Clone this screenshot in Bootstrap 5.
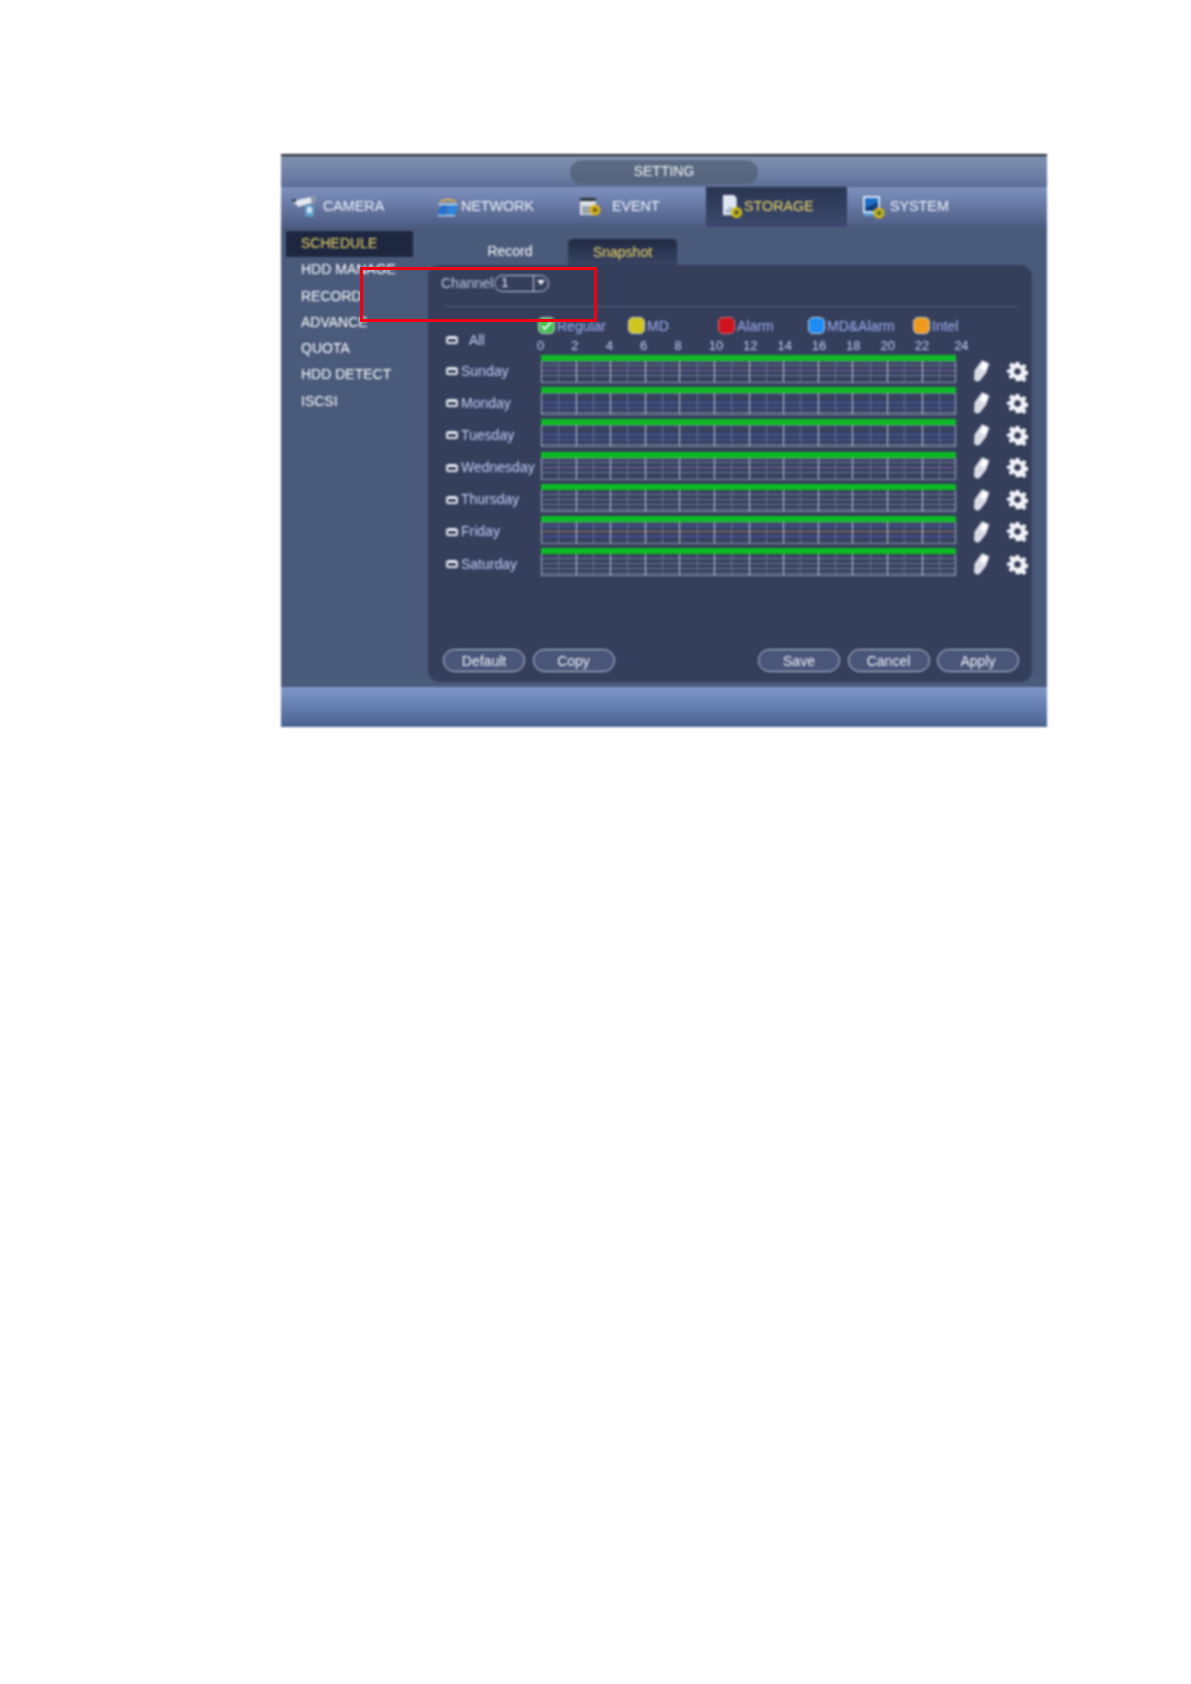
<!doctype html>
<html lang="en">
<head>
<meta charset="utf-8">
<title>Setting - Storage Schedule</title>
<link href="https://cdn.jsdelivr.net/npm/bootstrap@5.3.0/dist/css/bootstrap.min.css" rel="stylesheet">
<style>
html,body{background:#fff;height:1684px;overflow:hidden}
body{font-family:"Liberation Sans",Arial,sans-serif;padding:154px 144px 0 281px}
.dvr-wrap{position:relative;width:766px;height:573px}
.dvr{width:766px;height:573px;background:#4a5a7b;filter:blur(.8px);overflow:hidden;display:flex;flex-direction:column;border-top:2px solid #22262f}
.dvr-title{height:31px;background:linear-gradient(#7f90ae,#6a7da3 70%,#5a6c93);justify-content:center;align-items:center;flex:none}
.dvr-pill{width:188px;height:24px;border-radius:12px;background:linear-gradient(#5d6b84,#55637e);color:#f4f5f8;font-size:14px;line-height:22px;text-align:center}
.dvr-tabs{height:40px;flex:none;background:linear-gradient(#7e91bf,#6a7ca8 40%,#4c5c83)}
.dvr-tab{display:flex;align-items:center;color:#f0f3fb;font-size:14.3px;height:40px;flex:none}
.dvr-tab.on{background:linear-gradient(#2a3552,#3d4a6e);color:#f0d868}
.t1{width:135px;padding-left:10px;gap:4px}
.t2{width:147px;padding-left:21px;gap:1px;margin-left:-1px}
.t3{width:144px;padding-left:17px;gap:9px}
.t4{width:141px;padding-left:16px;gap:0}
.t5{width:160px;padding-left:15px;gap:4px}
.dvr-main{flex:1;min-height:0}
.dvr-side{width:147px;flex:none;padding:4px 0 0 5px}
.dvr-side div{height:26.3px;line-height:25px;color:#fff;font-size:14px;padding-left:15px;width:127px}
.dvr-side div.on{background:#1d2740;color:#f2da68;border-radius:1px}
.dvr-body{width:604px;flex:none;display:flex;flex-direction:column}
.dvr-sub{height:38px;flex:none;padding:12px 0 0 0;display:flex}
.sub-a{width:140px;text-align:center;padding:2px 0 0 24px;color:#fff;font-size:14px}
.sub-b{width:109px;border-radius:5px 5px 0 0;background:linear-gradient(#202a42,#384463);color:#f2da68;font-size:14px;text-align:center;line-height:26px}
.dvr-inner{height:417px;flex:none;background:#353f5c;border-radius:12px;padding:10px 13px 0 13px}
.chan{display:flex;align-items:center;color:#bcc6e2;font-size:14px;height:17px}
.chan-sel{margin-left:1px;width:55px;height:17px;border:1.5px solid #c8cedd;border-radius:9px;color:#f2f4f8;font-size:13px;line-height:14px;padding-left:6px;position:relative;display:block}
.chan-sel i{position:absolute;right:0;top:0;bottom:0;width:15px;border-left:1px solid #c8cedd}
.chan-sel i::after{content:"";position:absolute;left:3px;top:4px;border:4px solid transparent;border-top:5px solid #f2f4f8}
.dvr-rule{height:1px;background:#56607c;margin:14px 0 0 4px;width:573px}
.dvr-head{display:flex;margin-top:10px;height:38px}
.allcell{width:97px;flex:none;padding:8px 0 0 5px;display:flex;align-items:center;color:#ccd5f4;font-size:14px;gap:11px}
.legend{height:20px;display:flex}
.lg{display:flex;align-items:flex-start;gap:2px;color:#9db0f4;font-size:14px;line-height:19px;flex:none;width:90px}
.lg.wide{width:105px}
.lg b{width:17px;height:17px;border-radius:5px;border:1.5px solid #c8ced8;display:block;flex:none}
.c-g{background:#3fbf4f;display:flex!important;align-items:center;justify-content:center}
.c-y{background:#cfc51c}
.c-r{background:#d0121e;border-color:#d87080!important}
.c-b{background:#1e8cf4}
.c-o{background:#ee9a1c}
.hours{display:flex;height:18px;color:#c2cef0;font-size:13px;line-height:18px;margin-left:-1px}
.hours span{width:34.35px;flex:none}
.hours span:last-child{margin-left:5px}
.cbx{width:12px;height:8px;border:2px solid #e6e9f0;border-radius:3px 3px 2px 2px;display:block;flex:none;border-top-width:3px}
.dayrow{display:flex;height:32.2px}
.dayname{width:100px;padding-left:5px;display:flex;align-items:center;gap:3px;color:#c0ccf8;font-size:14px;height:28px;margin-top:2px;flex:none;white-space:nowrap}
.dgrid{width:415px;height:28px;flex:none;border-left:1px solid #a0aabd;border-right:1px solid #a0aabd}
.dgrid em{display:block;height:6px;background:#0cbc24;margin:0 -1px}
.dgrid s{display:block;height:22px;background-color:#37425f;border-bottom:1px solid #8f99b2;
 background-image:repeating-linear-gradient(90deg,transparent 0 33.6px,#c0c8d8 33.6px 34.6px),repeating-linear-gradient(90deg,transparent 0 16.3px,#66718f 16.3px 17.3px),repeating-linear-gradient(180deg,transparent 0 4px,#6f7a96 4px 5px)}
.dgrid s.bl{background-image:repeating-linear-gradient(90deg,transparent 0 33.6px,#c0c8d8 33.6px 34.6px),repeating-linear-gradient(90deg,transparent 0 16.3px,#66718f 16.3px 17.3px),linear-gradient(180deg,#6f7a96 0 1px,transparent 1px 9px,#4f5cc0 9px 10px,transparent 10px 14px,#4f5cc0 14px 15px,transparent 15px 19px,#6f7a96 19px 20px,transparent 20px)}
.dgrid s.pu{background-image:repeating-linear-gradient(90deg,transparent 0 33.6px,#c0c8d8 33.6px 34.6px),repeating-linear-gradient(90deg,transparent 0 16.3px,#66718f 16.3px 17.3px),linear-gradient(180deg,#6f7a96 0 1px,transparent 1px 4px,#6f7a96 4px 5px,transparent 5px 9px,#8a60b0 9px 10px,transparent 10px 14px,#6f7a96 14px 15px,transparent 15px)}
.dgrid s.or{background-image:repeating-linear-gradient(90deg,transparent 0 33.6px,#c0c8d8 33.6px 34.6px),repeating-linear-gradient(90deg,transparent 0 16.3px,#66718f 16.3px 17.3px),linear-gradient(180deg,#6f7a96 0 1px,transparent 1px 4px,#4f5cc0 4px 5px,transparent 5px 9px,#a87060 9px 10px,transparent 10px 14px,#4f5cc0 14px 15px,transparent 15px)}
.acts{display:flex;align-items:center;margin-left:17px;gap:17px;height:28px;margin-top:2px;flex:none}
.dvr-foot{display:flex;margin-top:69px;padding-left:2px}
.dvr-btn{width:82px;height:23px;border:1.5px solid #c0c8d8;border-radius:12px;background:#49567a;color:#f2f4f8;font-size:14px;line-height:20px;text-align:center;padding:0;display:block}
.dvr-btn.nxt{margin-left:7.5px}
.dvr-bar{height:40px;margin-top:auto;flex:none;background:linear-gradient(#7f98c8,#6a83b5 40%,#47608f)}
.redbox{position:absolute;left:79px;top:113px;width:237px;height:55px;border:3.5px solid #f00010;pointer-events:none}
</style>
</head>
<body>
<svg width="0" height="0" class="d-block">
 <symbol id="pen" viewBox="0 0 17 24"><path d="M10 1.500l5 2.200c1 .5 1.300 1.300 1 2.300l-3 8-6 7.500c-.8 1-1.700 1.300-3 1-1.700-.4-2.800-1.500-3-3l.6-8L7.800 2.700C8.200 1.700 9 1.200 10 1.500z" fill="#d8dbe4"/><path d="M10 3l4.600 2-2.500 7-5-2.500z" fill="#fff"/></symbol>
 <symbol id="gear" viewBox="0 0 24 24"><path fill="#f2f3f7" fill-rule="evenodd" d="M10 1h4l.7 3.300 2 .8 2.800-1.800 2.800 2.800-1.800 2.800.8 2 3.300.7v4l-3.300.7-.8 2 1.800 2.800-2.800 2.800-2.800-1.800-2 .8L14 23h-4l-.7-3.300-2-.8-2.800 1.800-2.800-2.800 1.800-2.800-.8-2L0 14v-4l3.300-.7.8-2L2.300 4.500 5.100 1.700l2.800 1.800 2-.8zM12 8.200a3.800 3.800 0 1 0 0 7.600 3.800 3.800 0 0 0 0-7.600z"/></symbol>
</svg>
<div class="dvr-wrap">
 <div class="dvr">
  <div class="dvr-title d-flex"><div class="dvr-pill">SETTING</div></div>
  <div class="dvr-tabs d-flex">
   <div class="dvr-tab t1"><svg width="28" height="24" viewBox="0 0 28 24"><path d="M1 6l19-4 1 6-14 4-2-3-3-1z" fill="#e4e7ee"/><path d="M1 5l4-1 0 3-4 0z" fill="#2c3038"/><path d="M20 1l5 0 0 7-4 1z" fill="#8a94ad"/><rect x="14" y="10" width="9" height="12" rx="2" fill="#5d9ac4"/><rect x="16" y="12" width="5" height="6" fill="#cfe3ef"/></svg><span>CAMERA</span></div>
   <div class="dvr-tab t2"><svg width="24" height="22" viewBox="0 0 28 24"><path d="M5 6q9-5 18 0" stroke="#e8b93c" stroke-width="2" fill="none"/><path d="M3 9h22" stroke="#dfe6f0" stroke-width="2"/><path d="M6 10h8l-3 12H2z" fill="#1e73d6"/><path d="M16 10h9l-3 11h-9z" fill="#2a86e4"/><path d="M2 22h20" stroke="#cfe0f2" stroke-width="1.500"/></svg><span>NETWORK</span></div>
   <div class="dvr-tab t3"><svg width="24" height="24" viewBox="0 0 24 24"><rect x="1" y="3" width="16" height="3" fill="#2b2f38"/><rect x="1" y="6" width="16" height="14" fill="#dfe3e8"/><rect x="3" y="11" width="8" height="8" fill="#9aa4ae"/><circle cx="16" cy="15" r="5.500" fill="#d9b21e"/><circle cx="16" cy="15" r="2.500" fill="#7d6a10"/></svg><span>EVENT</span></div>
   <div class="dvr-tab on t4"><svg width="22" height="28" viewBox="0 0 24 30"><path d="M1 2h12l3 3v19H1z" fill="#dfe6f2"/><path d="M3 20l6-6 3 4-5 5z" fill="#aebcd2"/><circle cx="16" cy="21" r="6" fill="#c9b41c"/><circle cx="16" cy="21" r="2.400" fill="#4d5a2a"/></svg><span>STORAGE</span></div>
   <div class="dvr-tab t5"><svg width="24" height="28" viewBox="0 0 24 28"><rect x="1" y="3" width="17" height="17" fill="#d7e2f0"/><rect x="3" y="5" width="13" height="13" fill="#1d6fc6"/><path d="M3 15l13-6v9H3z" fill="#123e7c"/><path d="M2 20h15v3H2z" fill="#5aa0d8"/><circle cx="17" cy="20" r="5.500" fill="#c9b41c"/><circle cx="17" cy="20" r="2.200" fill="#4f6a3a"/></svg><span>SYSTEM</span></div>
  </div>
  <div class="dvr-main d-flex">
   <div class="dvr-side">
    <div class="on">SCHEDULE</div><div>HDD MANAGE</div><div>RECORD</div><div>ADVANCE</div><div>QUOTA</div><div>HDD DETECT</div><div>ISCSI</div>
   </div>
   <div class="dvr-body">
    <div class="dvr-sub"><div class="sub-a">Record</div><div class="sub-b">Snapshot</div></div>
    <div class="dvr-inner">
     <div class="chan"><span>Channel</span><span class="chan-sel">1<i></i></span></div>
     <div class="dvr-rule"></div>
     <div class="dvr-head">
      <div class="allcell"><i class="cbx"></i><span>All</span></div>
      <div>
       <div class="legend">
        <div class="lg"><b class="c-g"><svg width="11" height="10" viewBox="0 0 11 10"><path d="M1 5l3 3 6-7" stroke="#eaf6ea" stroke-width="2" fill="none"/></svg></b><span>Regular</span></div>
        <div class="lg"><b class="c-y"></b><span>MD</span></div>
        <div class="lg"><b class="c-r"></b><span>Alarm</span></div>
        <div class="lg wide"><b class="c-b"></b><span>MD&amp;Alarm</span></div>
        <div class="lg"><b class="c-o"></b><span>Intel</span></div>
       </div>
       <div class="hours"><span>0</span><span>2</span><span>4</span><span>6</span><span>8</span><span>10</span><span>12</span><span>14</span><span>16</span><span>18</span><span>20</span><span>22</span><span>24</span></div>
      </div>
     </div>
     <div class="dayrow"><div class="dayname"><i class="cbx"></i><span>Sunday</span></div><div class="dgrid"><em></em><s class="pu"></s></div><div class="acts"><svg width="17" height="24"><use href="#pen"/></svg><svg width="21" height="21"><use href="#gear"/></svg></div></div>
     <div class="dayrow"><div class="dayname"><i class="cbx"></i><span>Monday</span></div><div class="dgrid"><em></em><s class="bl"></s></div><div class="acts"><svg width="17" height="24"><use href="#pen"/></svg><svg width="21" height="21"><use href="#gear"/></svg></div></div>
     <div class="dayrow"><div class="dayname"><i class="cbx"></i><span>Tuesday</span></div><div class="dgrid"><em></em><s class="bl"></s></div><div class="acts"><svg width="17" height="24"><use href="#pen"/></svg><svg width="21" height="21"><use href="#gear"/></svg></div></div>
     <div class="dayrow"><div class="dayname"><i class="cbx"></i><span>Wednesday</span></div><div class="dgrid"><em></em><s class="pu"></s></div><div class="acts"><svg width="17" height="24"><use href="#pen"/></svg><svg width="21" height="21"><use href="#gear"/></svg></div></div>
     <div class="dayrow"><div class="dayname"><i class="cbx"></i><span>Thursday</span></div><div class="dgrid"><em></em><s></s></div><div class="acts"><svg width="17" height="24"><use href="#pen"/></svg><svg width="21" height="21"><use href="#gear"/></svg></div></div>
     <div class="dayrow"><div class="dayname"><i class="cbx"></i><span>Friday</span></div><div class="dgrid"><em></em><s class="or"></s></div><div class="acts"><svg width="17" height="24"><use href="#pen"/></svg><svg width="21" height="21"><use href="#gear"/></svg></div></div>
     <div class="dayrow"><div class="dayname"><i class="cbx"></i><span>Saturday</span></div><div class="dgrid"><em></em><s></s></div><div class="acts"><svg width="17" height="24"><use href="#pen"/></svg><svg width="21" height="21"><use href="#gear"/></svg></div></div>
     <div class="dvr-foot">
      <button class="dvr-btn" type="button">Default</button><button class="dvr-btn nxt" type="button">Copy</button>
      <button class="dvr-btn ms-auto" type="button">Save</button><button class="dvr-btn nxt" type="button">Cancel</button><button class="dvr-btn nxt" type="button">Apply</button>
     </div>
    </div>
   </div>
  </div>
  <div class="dvr-bar"></div>
 </div>
 <div class="redbox"></div>
</div>
<script src="https://cdn.jsdelivr.net/npm/bootstrap@5.3.0/dist/js/bootstrap.bundle.min.js"></script>
</body>
</html>
